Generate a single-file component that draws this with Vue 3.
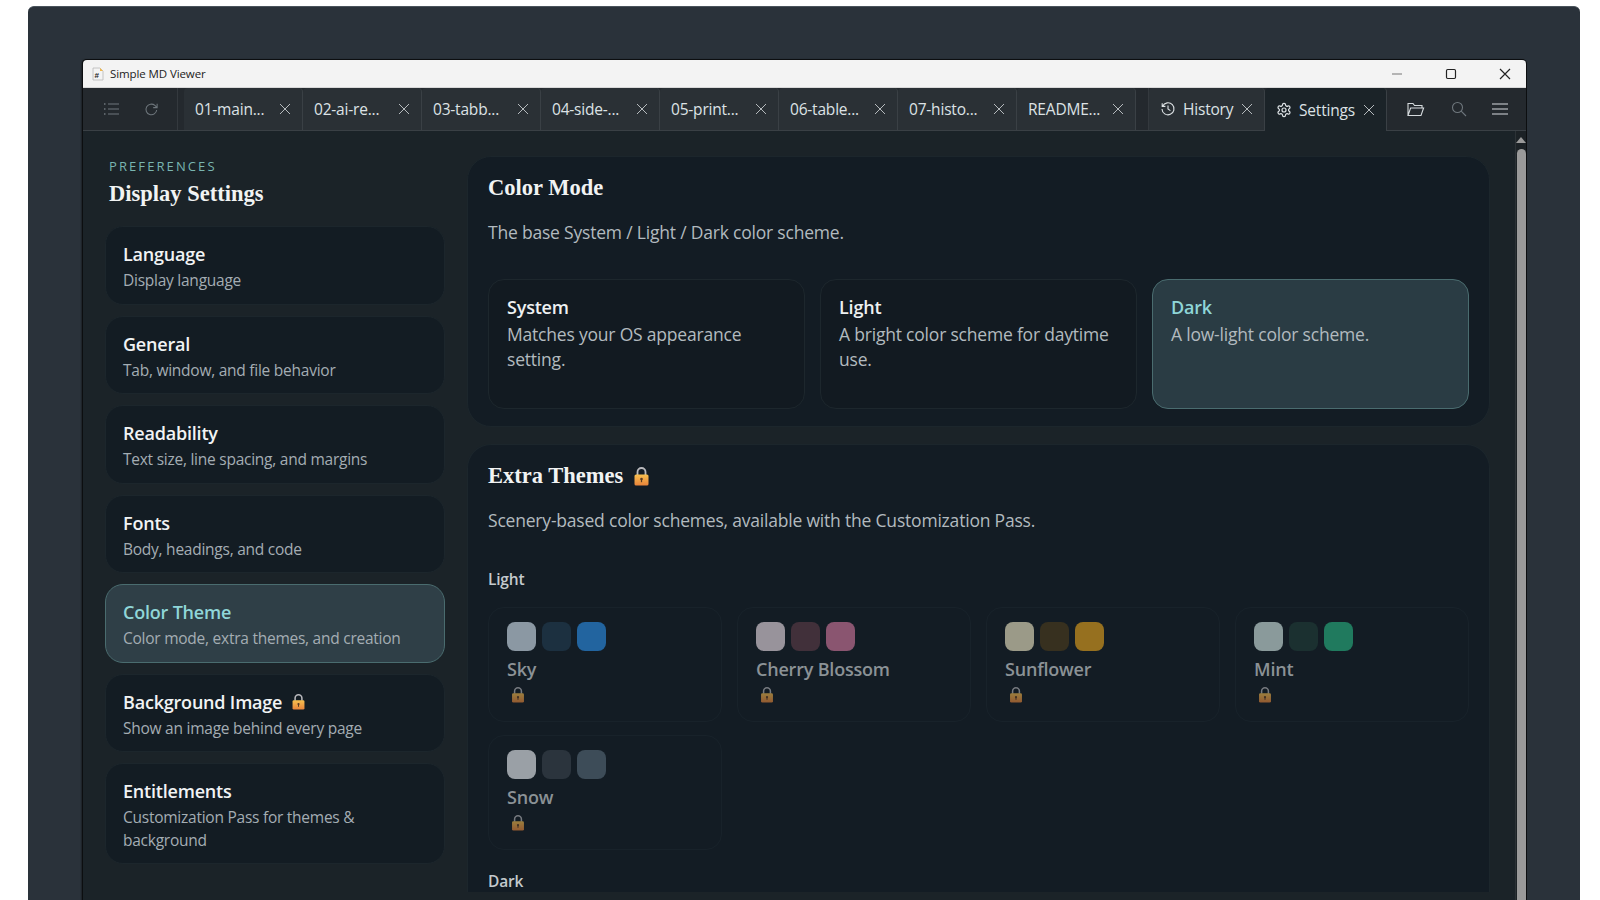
<template>
  <div class="page">
    <svg class="defs" width="0" height="0" aria-hidden="true">
      <defs>
        <linearGradient id="lockBody" x1="0" y1="0" x2="0" y2="1">
          <stop offset="0" stop-color="#f7c04f" />
          <stop offset="1" stop-color="#e8833a" />
        </linearGradient>
        <symbol id="lock" viewBox="0 0 16 20">
          <path d="M4 9V6a4 4 0 0 1 8 0v3" fill="none" stroke="#b9b9bd" stroke-width="1.8" />
          <rect x="1" y="8.5" width="14" height="11" rx="1.6" fill="url(#lockBody)" />
          <circle cx="8" cy="13" r="1.3" fill="#5a3a22" />
          <rect x="7.4" y="13" width="1.2" height="3.2" fill="#5a3a22" />
        </symbol>
      </defs>
    </svg>

    <div class="frame">
      <div class="window">
        <div class="titlebar">
          <svg class="app-icon" viewBox="0 0 14 14">
            <path d="M2 1h7l3 3v9H2z" fill="#f4f4f4" stroke="#b8b8b8" stroke-width=".8" />
            <path d="M9 1l3 3H9z" fill="#f2b84b" />
            <text x="3.6" y="11" class="hash">#</text>
          </svg>
          <span class="app-name">Simple MD Viewer</span>
          <div class="win-btns">
            <svg viewBox="0 0 12 12" width="12" height="12"><path d="M1 6h10" stroke="#777" stroke-width="1.2" /></svg>
            <svg viewBox="0 0 12 12" width="12" height="12"><rect x="1.5" y="1.5" width="9" height="9" rx="1.2" fill="none" stroke="#222" stroke-width="1.2" /></svg>
            <svg viewBox="0 0 12 12" width="12" height="12"><path d="M1 1l10 10M11 1L1 11" stroke="#222" stroke-width="1.2" /></svg>
          </div>
        </div>

        <div class="toolbar">
          <div class="tool-left">
            <svg viewBox="0 0 16 14" width="16" height="14" class="dim">
              <path d="M5 2h11M5 7h11M5 12h11" stroke="currentColor" stroke-width="1.1" />
              <path d="M1 2h1.5M1 7h1.5M1 12h1.5" stroke="currentColor" stroke-width="1.6" />
            </svg>
            <svg viewBox="0 0 16 16" width="15" height="15" class="dim">
              <path d="M13.5 8.5A5.7 5.7 0 1 1 11.6 3.7L14 6M14 1.8V6H9.8" fill="none" stroke="currentColor" stroke-width="1.1" />
            </svg>
          </div>
          <div class="tabs">
            <div v-for="t in fileTabs" :key="t" class="tab">
              <span class="tab-label">{{ t }}</span>
              <svg class="x" viewBox="0 0 12 12"><path d="M1 1l10 10M11 1L1 11" stroke="currentColor" stroke-width="1" /></svg>
            </div>
          </div>
          <div class="tab fixed history">
            <svg class="tab-icon" viewBox="0 0 16 16">
              <path d="M2.6 5.2A6 6 0 1 1 2 8M2.2 2.2v3.2h3.2M8 4.4V8l2.4 1.6" fill="none" stroke="currentColor" stroke-width="1.1" />
            </svg>
            <span class="tab-label">History</span>
            <svg class="x" viewBox="0 0 12 12"><path d="M1 1l10 10M11 1L1 11" stroke="currentColor" stroke-width="1" /></svg>
          </div>
          <div class="tab fixed settings">
            <svg class="tab-icon" viewBox="0 0 24 24">
              <path d="M12.22 2h-.44a2 2 0 0 0-2 2v.18a2 2 0 0 1-1 1.73l-.43.25a2 2 0 0 1-2 0l-.15-.08a2 2 0 0 0-2.73.73l-.22.38a2 2 0 0 0 .73 2.73l.15.1a2 2 0 0 1 1 1.72v.51a2 2 0 0 1-1 1.74l-.15.09a2 2 0 0 0-.73 2.73l.22.38a2 2 0 0 0 2.73.73l.15-.08a2 2 0 0 1 2 0l.43.25a2 2 0 0 1 1 1.73V20a2 2 0 0 0 2 2h.44a2 2 0 0 0 2-2v-.18a2 2 0 0 1 1-1.73l.43-.25a2 2 0 0 1 2 0l.15.08a2 2 0 0 0 2.73-.73l.22-.39a2 2 0 0 0-.73-2.73l-.15-.08a2 2 0 0 1-1-1.74v-.5a2 2 0 0 1 1-1.74l.15-.09a2 2 0 0 0 .73-2.73l-.22-.38a2 2 0 0 0-2.73-.73l-.15.08a2 2 0 0 1-2 0l-.43-.25a2 2 0 0 1-1-1.73V4a2 2 0 0 0-2-2z" fill="none" stroke="currentColor" stroke-width="1.8" />
              <circle cx="12" cy="12" r="3" fill="none" stroke="currentColor" stroke-width="1.8" />
            </svg>
            <span class="tab-label">Settings</span>
            <svg class="x" viewBox="0 0 12 12"><path d="M1 1l10 10M11 1L1 11" stroke="currentColor" stroke-width="1" /></svg>
          </div>
          <div class="tool-right">
            <svg viewBox="0 0 18 15" width="18" height="15" class="bright">
              <path d="M1 13.5V1.5h5l1.5 2H15v2.5M1 13.5h13l2.6-7.5H3.6z" fill="none" stroke="currentColor" stroke-width="1.1" />
            </svg>
            <svg viewBox="0 0 16 16" width="16" height="16" class="dim">
              <circle cx="6.5" cy="6.5" r="5" fill="none" stroke="currentColor" stroke-width="1.1" />
              <path d="M10.2 10.2L15 15" stroke="currentColor" stroke-width="1.1" />
            </svg>
            <svg viewBox="0 0 16 12" width="16" height="12" class="bright">
              <path d="M0 1h16M0 6h16M0 11h16" stroke="currentColor" stroke-width="1.2" />
            </svg>
          </div>
        </div>

        <div class="body">
          <aside class="sidebar">
            <div class="eyebrow">PREFERENCES</div>
            <h1 class="side-title">Display Settings</h1>
            <div class="nav">
              <div v-for="n in navItems" :key="n.title" class="nav-card" :class="{ active: n.active }">
                <div class="nav-title">
                  {{ n.title }}
                  <svg v-if="n.locked" class="lock-sm"><use href="#lock" /></svg>
                </div>
                <div class="nav-desc">{{ n.desc }}</div>
              </div>
            </div>
          </aside>

          <main class="content">
            <section class="panel first">
              <h2 class="panel-title">Color Mode</h2>
              <p class="panel-desc">The base System / Light / Dark color scheme.</p>
              <div class="modes">
                <div v-for="m in modes" :key="m.title" class="mode" :class="{ active: m.active }">
                  <div class="mode-title">{{ m.title }}</div>
                  <div class="mode-desc">{{ m.desc }}</div>
                </div>
              </div>
            </section>

            <section class="panel">
              <h2 class="panel-title">
                Extra Themes
                <svg class="lock-md"><use href="#lock" /></svg>
              </h2>
              <p class="panel-desc">Scenery-based color schemes, available with the Customization Pass.</p>
              <div class="group-label">Light</div>
              <div class="themes">
                <div v-for="t in lightThemes" :key="t.name" class="theme">
                  <div class="swatches">
                    <span v-for="c in t.colors" :key="c" class="swatch" :style="{ background: c }"></span>
                  </div>
                  <div class="theme-name">{{ t.name }}</div>
                  <svg class="lock-dim"><use href="#lock" /></svg>
                </div>
              </div>
              <div class="group-label dark">Dark</div>
            </section>
          </main>

          <div class="scrollbar">
            <span class="arrow"></span>
            <span class="thumb"></span>
          </div>
        </div>
      </div>
    </div>
  </div>
</template>

<script setup>
const fileTabs = ['01-main...', '02-ai-re...', '03-tabb...', '04-side-...', '05-print...', '06-table...', '07-histo...', 'README...']

const navItems = [
  { title: 'Language', desc: 'Display language' },
  { title: 'General', desc: 'Tab, window, and file behavior' },
  { title: 'Readability', desc: 'Text size, line spacing, and margins' },
  { title: 'Fonts', desc: 'Body, headings, and code' },
  { title: 'Color Theme', desc: 'Color mode, extra themes, and creation', active: true },
  { title: 'Background Image', desc: 'Show an image behind every page', locked: true },
  { title: 'Entitlements', desc: 'Customization Pass for themes & background' }
]

const modes = [
  { title: 'System', desc: 'Matches your OS appearance setting.' },
  { title: 'Light', desc: 'A bright color scheme for daytime use.' },
  { title: 'Dark', desc: 'A low-light color scheme.', active: true }
]

const lightThemes = [
  { name: 'Sky', colors: ['#8b98a3', '#1c3040', '#22649f'] },
  { name: 'Cherry Blossom', colors: ['#98939b', '#41303a', '#8a5570'] },
  { name: 'Sunflower', colors: ['#9b9a88', '#37301f', '#96701f'] },
  { name: 'Mint', colors: ['#8a9a9b', '#1b3030', '#207a5e'] },
  { name: 'Snow', colors: ['#9aa0a6', '#2b343d', '#3d4c58'] }
]
</script>

<style>
html, body { margin: 0; height: 100%; overflow: hidden; background: #fff; }
</style>

<style scoped>
.page {
  height: 900px;
  overflow: hidden;
  font-family: "Open Sans", "Noto Sans", sans-serif;
  background: #fff;
}
.defs { position: absolute; }
.frame {
  height: 894px;
  margin: 6px 20px 0 28px;
  padding: 53px 54px 0 55px;
  box-sizing: border-box;
  background: #2a323a;
  border-radius: 6px 6px 0 0;
  border-top: 1px solid #4a545c;
}
.window {
  height: 860px;
  display: flex;
  flex-direction: column;
  border-radius: 4px 4px 0 0;
  box-shadow: 0 0 0 1px #0c0e10, -1px 0 2px #000;
  overflow: hidden;
  background: #1b2328;
}

.titlebar {
  height: 27px;
  flex-shrink: 0;
  display: flex;
  align-items: center;
  padding-left: 8px;
  background: #f3f3f3;
  border-bottom: 1px solid #d8d8d8;
}
.app-icon { width: 14px; height: 14px; margin-right: 5px; }
.hash { font: 700 8px "Liberation Sans", sans-serif; fill: #222; }
.app-name { font-size: 11.5px; color: #222; letter-spacing: -.1px; }
.win-btns {
  margin-left: auto;
  width: 135px;
  display: flex;
  align-items: center;
  justify-content: space-between;
  padding-right: 15px;
  box-sizing: border-box;
}

.toolbar {
  height: 43px;
  flex-shrink: 0;
  display: flex;
  background: #24292e;
  border-bottom: 1px solid #3a4045;
  box-sizing: border-box;
  color: #dde2e5;
}
.tool-left {
  width: 95px;
  flex-shrink: 0;
  display: flex;
  align-items: center;
  gap: 25px;
  padding-left: 20px;
  box-sizing: border-box;
  border-right: 1px solid #34393e;
}
.dim { color: #6e767c; }
.bright { color: #d5dadd; }
.tabs {
  display: flex;
  margin-left: 6px;
  padding-right: 12px;
  border-right: 1px solid #34393e;
}
.tab {
  width: 119px;
  height: 42px;
  display: flex;
  align-items: center;
  padding: 0 11px;
  box-sizing: border-box;
  background: #2a3035;
  border-right: 1px solid #3a4045;
  border-radius: 4px 4px 0 0;
}
.tab-label { font-size: 15.5px; flex: 1; white-space: nowrap; letter-spacing: -.2px; }
.x { width: 12px; height: 12px; flex-shrink: 0; color: #b5babd; }
.tab.fixed { gap: 7px; }
.tab.history { width: 116px; }
.tab.settings {
  width: 122px;
  height: 43px;
  background: #1b2328;
  border-right: 1px solid #3a4045;
  position: relative;
  z-index: 1;
}
.tab-icon { width: 16px; height: 16px; flex-shrink: 0; }
.tool-right {
  flex: 1;
  display: flex;
  align-items: center;
  justify-content: space-between;
  padding: 0 18px 0 20px;
}

.body { flex: 1; min-height: 0; display: flex; }
.sidebar { width: 384px; flex-shrink: 0; box-sizing: border-box; padding: 26px 22px 0; }
.eyebrow { font-size: 13px; line-height: 18px; letter-spacing: 2.1px; color: #79b5b0; padding-left: 4px; }
.side-title {
  margin: 4px 0 0;
  padding-left: 4px;
  font: 700 22.5px/30px "Liberation Serif", serif;
  color: #f1f3f3;
}
.nav { display: flex; flex-direction: column; gap: 11px; margin-top: 17px; }
.nav-card {
  padding: 14px 17px 12px;
  background: #131c23;
  border: 1px solid #1c262c;
  border-radius: 18px;
}
.nav-card.active { background: #2f3f47; border-color: #4a6c6f; }
.nav-title {
  display: flex;
  align-items: center;
  gap: 9px;
  font-size: 18px;
  font-weight: 600;
  line-height: 26px;
  color: #f1f3f4;
  letter-spacing: -.2px;
}
.active .nav-title { color: #8fd6d8; }
.nav-desc { font-size: 15.5px; line-height: 22.5px; color: #a4adb3; margin-top: 2px; letter-spacing: -.25px; }
.lock-sm { width: 15px; height: 17px; }

.content { flex: 1; min-width: 0; padding: 25px 25px 0 0; }
.panel {
  margin-top: 17px;
  padding: 17px 20px 0;
  background: #131c24;
  border: 1px solid #1c262c;
  border-bottom: 0;
  border-radius: 24px 24px 0 0;
  box-sizing: border-box;
}
.panel.first { margin-top: 0; height: 271px; border-bottom: 1px solid #1c262c; border-radius: 24px; }
.panel-title {
  display: flex;
  align-items: center;
  gap: 10px;
  margin: 0;
  font: 700 22.5px/28px "Liberation Serif", serif;
  color: #f1f3f3;
}
.panel-desc { margin: 16px 0 0; font-size: 17.5px; line-height: 28px; color: #b2babf; letter-spacing: -.2px; }
.modes { display: grid; grid-template-columns: repeat(3, 317px); gap: 15px; margin-top: 33px; }
.mode {
  height: 130px;
  box-sizing: border-box;
  padding: 15px 18px;
  background: #121a21;
  border: 1px solid #1d272d;
  border-radius: 16px;
}
.mode.active { background: #2a3c44; border-color: #4a6c6f; }
.mode-title { font-size: 18px; font-weight: 600; line-height: 24px; color: #eef1f2; letter-spacing: -.2px; }
.mode.active .mode-title { color: #8fd6d8; }
.mode-desc { font-size: 17.5px; line-height: 24.5px; margin-top: 3px; color: #b2babf; letter-spacing: -.2px; }
.group-label { margin-top: 34px; font-size: 15.5px; font-weight: 600; line-height: 22px; color: #c4cacd; letter-spacing: -.2px; }
.group-label.dark { margin-top: 20px; }
.themes { display: grid; grid-template-columns: repeat(4, 234px); gap: 13px 15px; margin-top: 17px; }
.theme {
  height: 115px;
  box-sizing: border-box;
  padding: 14px 18px;
  border: 1px solid #18222a;
  border-radius: 16px;
}
.swatches { display: flex; gap: 6px; }
.swatch { width: 29px; height: 29px; border-radius: 8px; }
.theme-name { margin-top: 3px; font-size: 18px; font-weight: 600; line-height: 30px; color: #8b9296; letter-spacing: -.2px; }
.lock-dim { display: block; width: 14px; height: 17px; margin: 2px 0 0 4px; opacity: .6; }
.lock-md { width: 17px; height: 20px; }

.scrollbar {
  width: 11px;
  flex-shrink: 0;
  display: flex;
  flex-direction: column;
  align-items: center;
  background: #1c2226;
  border-left: 1px solid #2c3236;
  box-sizing: border-box;
}
.arrow {
  margin-top: 6px;
  border-left: 5px solid transparent;
  border-right: 5px solid transparent;
  border-bottom: 6px solid #9a9a9a;
}
.thumb { width: 9px; flex: 1; margin-top: 6px; background: #9a9a9a; border-radius: 5px 5px 0 0; }
</style>
